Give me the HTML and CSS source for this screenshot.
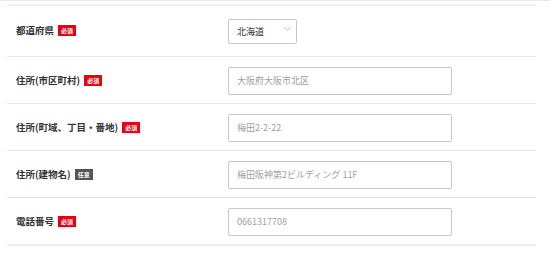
FILE: index.html
```html
<!DOCTYPE html>
<html lang="ja">
<head>
  <meta charset="UTF-8" />
  <meta name="viewport" content="width=device-width, initial-scale=1.0"/>
  <title>お届け先住所</title>
  <link rel="stylesheet" href="styles.css">
</head>
<body>

  <div class="page">
    <!-- Address form -->
    <div class="form-table">

      <div class="form-row form-row--first">
        <div class="form-label">都道府県<span class="badge">必須</span></div>
        <div class="form-field">
          <div class="select-wrap">
            <select class="select">
              <option>北海道</option>
            </select>
            <svg class="select-arrow" width="7" height="4" viewBox="0 0 7 4">
              <path d="M0.5 0.5 L3.5 3.3 L6.5 0.5" fill="none" stroke="#aaa" stroke-width="0.8"/>
            </svg>
          </div>
        </div>
      </div>

      <div class="form-row">
        <div class="form-label">住所(市区町村)<span class="badge">必須</span></div>
        <div class="form-field">
          <input class="input" type="text" placeholder="大阪府大阪市北区">
        </div>
      </div>

      <div class="form-row">
        <div class="form-label">住所(町域、丁目・番地)<span class="badge">必須</span></div>
        <div class="form-field">
          <input class="input" type="text" placeholder="梅田2-2-22">
        </div>
      </div>

      <div class="form-row">
        <div class="form-label">住所(建物名)<span class="badge badge--optional">任意</span></div>
        <div class="form-field">
          <input class="input" type="text" placeholder="梅田阪神第2ビルディング 11F">
        </div>
      </div>

      <div class="form-row">
        <div class="form-label">電話番号<span class="badge">必須</span></div>
        <div class="form-field">
          <input class="input" type="tel" placeholder="0661317708">
        </div>
      </div>

    </div>
  </div>

</body>
</html>
```

FILE: styles.css
```css
:root {
  --required: #e60012;
  --optional: #555555;
  --line: #e6e6e6;
  --text: #333333;
}

* {
  box-sizing: border-box;
  margin: 0;
  padding: 0;
}

body {
  font-family: "Noto Sans CJK JP", "Noto Sans", sans-serif;
  background-color: #fff;
  color: var(--text);
}

.page {
  border-top: 1px solid #e9e9e9;
  padding: 3px 14px 0 7px;
}

.form-table {
  border-top: 2px solid #eeeeee;
  border-bottom: 2px solid #eeeeee;
}

.form-row {
  display: flex;
  align-items: center;
  min-height: 47px;
  padding-left: 9px;
  border-bottom: 1px solid var(--line);
}

.form-row:last-child {
  border-bottom: none;
  min-height: 46px;
}

.form-row--first {
  min-height: 51px;
  padding-bottom: 2px;
}

.form-label {
  width: 212px;
  font-size: 9.5px;
  font-weight: bold;
  display: flex;
  align-items: center;
}

.badge {
  display: inline-block;
  margin-left: 4px;
  padding: 2px 3px;
  font-size: 6px;
  line-height: 7px;
  font-weight: bold;
  color: #fff;
  background-color: var(--required);
}

.badge--optional {
  background-color: var(--optional);
}

.select-wrap {
  position: relative;
  width: 69px;
}

.select {
  appearance: none;
  -webkit-appearance: none;
  width: 69px;
  height: 25px;
  padding-left: 8px;
  border: 1px solid #c8c8c8;
  border-radius: 2px;
  background: #fff;
  font-family: inherit;
  font-size: 9px;
  color: var(--text);
}

.select-arrow {
  position: absolute;
  right: 6px;
  top: 11px;
  pointer-events: none;
}

.input {
  width: 224px;
  height: 28px;
  padding-left: 8px;
  border: 1px solid #c8c8c8;
  border-radius: 2px;
  font-family: inherit;
  font-size: 9px;
  color: var(--text);
}

.input::placeholder {
  color: #a0a0a0;
}
```
